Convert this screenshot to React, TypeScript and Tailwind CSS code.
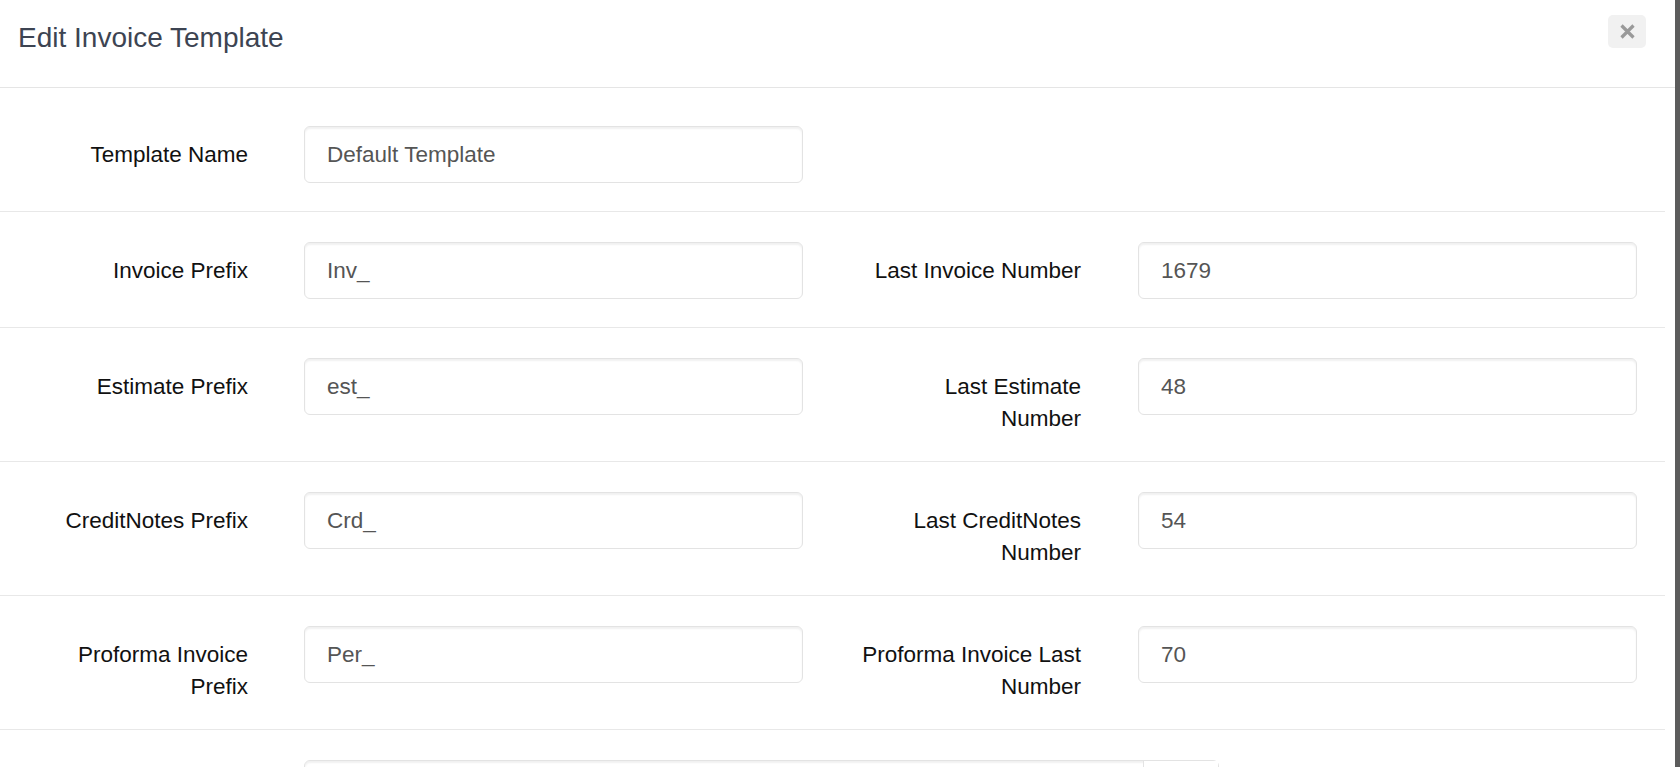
import React from "react";

interface Field {
	label: string;
	value: string;
}

interface RowProps {
	left: Field;
	right?: Field;
}

const FieldLabel = ({ text }: { text: string }) => (
	<label className="-mb-[2px] block w-[220px] shrink-0 pt-[13px] text-right text-[22.5px] leading-[32px] text-[#111]">
		{text}
	</label>
);

const FieldInput = ({ value }: { value: string }) => (
	<input
		readOnly
		value={value}
		className="block h-[57px] w-[499px] shrink-0 rounded-[6px] border border-[#e3e3e3] bg-white pl-[22px] pr-[21px] text-[22.5px] text-[#555] shadow-[inset_0_2px_2px_rgba(0,0,0,0.06)] outline-none"
	/>
);

const FormRow = ({ left, right }: RowProps) => (
	<div className="flex items-start border-b border-[#e8e8e8] pb-[28px] pl-[28px] pt-[30px]">
		<FieldLabel text={left.label} />
		<div className="ml-[56px]">
			<FieldInput value={left.value} />
		</div>
		{right && (
			<>
				<div className="ml-[58px]">
					<FieldLabel text={right.label} />
				</div>
				<div className="ml-[57px]">
					<FieldInput value={right.value} />
				</div>
			</>
		)}
	</div>
);

const rows: RowProps[] = [
	{ left: { label: "Template Name", value: "Default Template" } },
	{
		left: { label: "Invoice Prefix", value: "Inv_" },
		right: { label: "Last Invoice Number", value: "1679" },
	},
	{
		left: { label: "Estimate Prefix", value: "est_" },
		right: { label: "Last Estimate Number", value: "48" },
	},
	{
		left: { label: "CreditNotes Prefix", value: "Crd_" },
		right: { label: "Last CreditNotes Number", value: "54" },
	},
	{
		left: { label: "Proforma Invoice Prefix", value: "Per_" },
		right: { label: "Proforma Invoice Last Number", value: "70" },
	},
];

export default function App() {
	return (
		<div className="flex h-[767px] w-[1680px] overflow-hidden bg-white font-[family-name:'Liberation_Sans',Arial,sans-serif]">
			<div className="min-w-0 flex-1">
				{/* header */}
				<div className="flex h-[88px] items-start justify-between border-b border-[#e5e5e5] pl-[18px] pr-[29px]">
					<h4 className="pt-[23px] text-[28px] leading-[30px] text-[#3d4452]">
						Edit Invoice Template
					</h4>
					<button
						type="button"
						className="mt-[15px] flex h-[33px] w-[38px] items-center justify-center rounded-[5px] bg-[#f1f1f1]"
					>
						<svg width="15" height="15" viewBox="0 0 15 15">
							<path
								d="M1.5 1.5 L13.5 13.5 M13.5 1.5 L1.5 13.5"
								stroke="#999"
								strokeWidth="3.2"
								strokeLinecap="butt"
							/>
						</svg>
					</button>
				</div>

				{/* body */}
				<div className="mr-[10px] pt-[8px]">
					{rows.map((row) => (
						<FormRow key={row.left.label} left={row.left} right={row.right} />
					))}

					<div className="flex items-start pl-[28px] pt-[30px]">
						<div className="w-[220px] shrink-0" />
						<div className="ml-[56px] flex h-[57px] w-[915px] rounded-[6px] border border-[#e3e3e3] shadow-[inset_0_2px_2px_rgba(0,0,0,0.06)]">
							<div className="w-[839px] border-r border-[#e3e3e3]" />
							<div className="flex-1 bg-white" />
						</div>
					</div>
				</div>
			</div>
			<div className="w-[5px] shrink-0 bg-[#5c5c5c]" />
		</div>
	);
}
